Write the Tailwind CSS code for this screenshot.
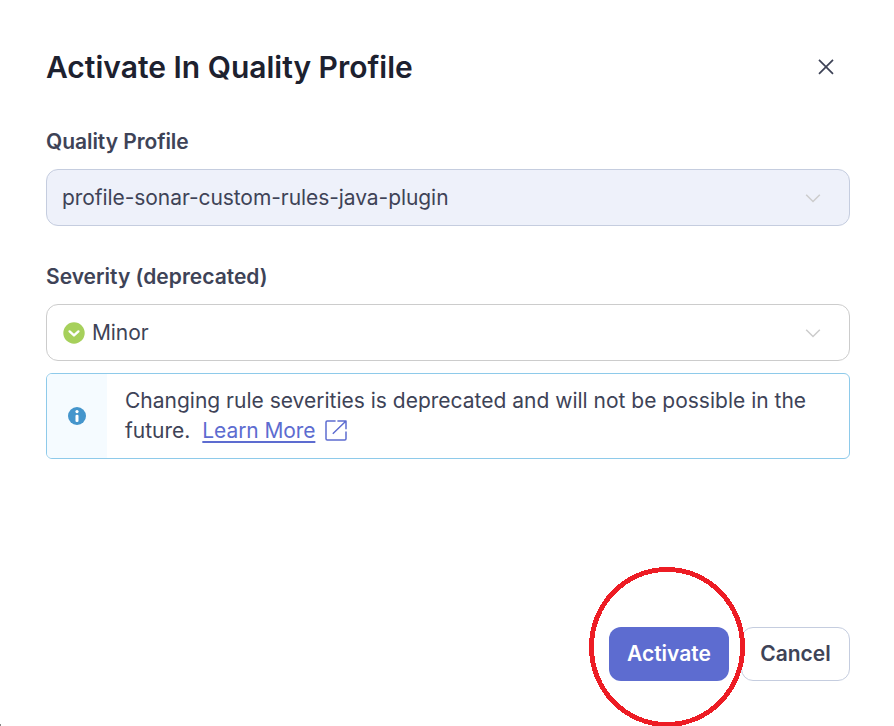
<!DOCTYPE html>
<html lang="en">
<head>
<meta charset="utf-8">
<title>Activate In Quality Profile</title>
<script src="https://cdn.jsdelivr.net/npm/@tailwindcss/browser@4"></script>
</head>
<body class="bg-white">
<main class="relative flex h-[726px] w-[894px] flex-col overflow-hidden bg-white pr-[44px] pb-[45px] pl-[46px] pt-[45px] font-['Inter',sans-serif] text-[21px] leading-[30px] text-[#3e4357]">
  <header class="flex h-[45px] items-center justify-between pr-[16px]">
    <h1 class="text-[30px] font-semibold leading-[45px] text-[#1d212f]">Activate In Quality Profile</h1>
    <button class="mb-[2px] size-4" aria-label="Close">
      <svg class="size-4" viewBox="0 0 16 16" fill="none" stroke="#3e4357" stroke-width="1.7"><path d="M1 0.8 15 14.8M15 0.8 1 14.8"/></svg>
    </button>
  </header>

  <label class="mt-[37px] font-semibold tracking-[-0.06px]">Quality Profile</label>
  <div class="mt-3 flex h-[57px] items-center justify-between rounded-[12px] border border-[#c5cddf] bg-[#eef1fa] pr-[28px] pl-[15px]">
    <span class="tracking-[-0.07px]">profile-sonar-custom-rules-java-plugin</span>
    <svg class="h-4 w-4" viewBox="0 0 16 16" fill="none" stroke="#cccccc" stroke-width="1.5"><path d="M1.2 4.8 8 11.5l6.8-6.7"/></svg>
  </div>

  <label class="mt-[36px] font-semibold">Severity (deprecated)</label>
  <div class="mt-3 flex h-[57px] items-center rounded-[12px] border border-[#cccccc] bg-white pr-[28px] pl-4">
    <svg class="mr-[7px] size-[22px]" viewBox="0 0 22 22" fill="none"><circle cx="11" cy="11" r="10.7" fill="#a6d05b"/><path d="M6.6 9.4 11 13.4l4.4-4" stroke="#fff" stroke-width="2.4" stroke-linecap="round" stroke-linejoin="round"/></svg>
    <span class="grow tracking-[-0.1px]">Minor</span>
    <svg class="h-4 w-4" viewBox="0 0 16 16" fill="none" stroke="#cccccc" stroke-width="1.5"><path d="M1.2 4.8 8 11.5l6.8-6.7"/></svg>
  </div>

  <div class="mt-3 flex h-[86px] overflow-hidden rounded-[6px] border border-[#8ecaea]">
    <div class="flex w-[60px] items-center justify-center bg-[#f5fbff]">
      <svg class="size-[18px]" viewBox="0 0 18 18"><circle cx="9" cy="9" r="9" fill="#4495cc"/><circle cx="9" cy="4.6" r="1.6" fill="#fff"/><rect x="7.5" y="7.7" width="3" height="7.3" rx="1.3" fill="#fff"/></svg>
    </div>
    <div class="pt-3 pl-[18px]">
      <p>Changing rule severities is deprecated and will not be possible in the</p>
      <p class="flex items-center">future.
        <a class="ml-3 flex items-center text-[#5d6cd0]"><span class="tracking-[-0.1px] underline decoration-2 underline-offset-[3px]">Learn More</span>
          <svg class="ml-[10px] size-[22px]" viewBox="0 0 22 22" fill="none" stroke="#5d6cd0" stroke-width="1.5" stroke-linejoin="round"><path d="M10.6 1H2.2Q1 1 1 2.2V18.8Q1 20 2.2 20H19.8Q21 20 21 18.8V11.4M12.4 1H21V9.3M21 1 7.8 13.8"/></svg>
        </a>
      </p>
    </div>
  </div>

  <footer class="mt-auto flex justify-end gap-3 font-semibold">
    <button class="h-[54px] w-[120px] rounded-[12px] bg-[#5d6cd0] text-white">Activate</button>
    <button class="h-[54px] w-[109px] rounded-[12px] border border-[#c5cddf] bg-white">Cancel</button>
  </footer>

  <svg class="pointer-events-none absolute top-[560px] left-[580px] h-[166px] w-[180px]" viewBox="0 0 180 166" fill="none" shape-rendering="crispEdges"><ellipse cx="87" cy="87" rx="75.5" ry="77.5" stroke="#ed1c24" stroke-width="5"/></svg>
  <span class="absolute bottom-0 left-0 h-[2px] w-px bg-[#888888]"></span>
</main>
</body>
</html>
